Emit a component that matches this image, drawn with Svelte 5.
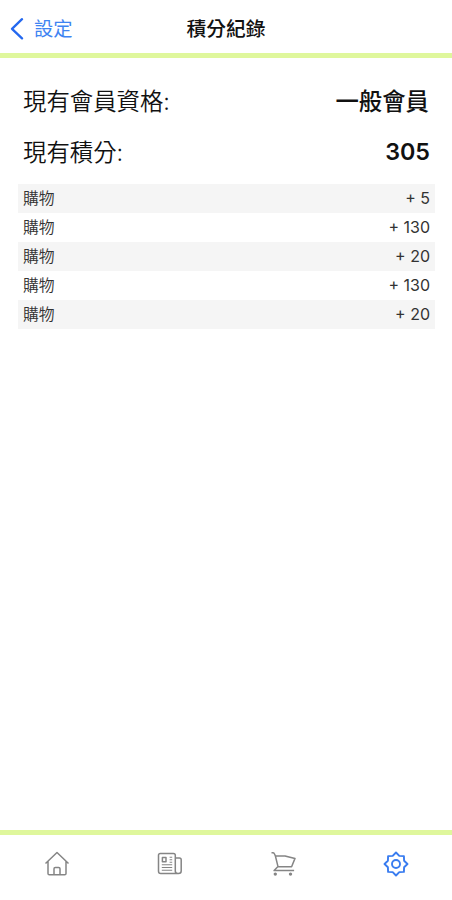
<!--
  PointsHistory — membership tier, current points and the list of point changes.
-->
<script>
  let active = $state('settings');

  const membership = '一般會員';
  const points = 305;
  const records = [
    { label: '購物', amount: 5 },
    { label: '購物', amount: 130 },
    { label: '購物', amount: 20 },
    { label: '購物', amount: 130 },
    { label: '購物', amount: 20 },
  ];
  const TABS = ['home', 'news', 'cart', 'settings'];
</script>

<div class="screen">
  <header>
    <button class="back">
      <svg width="14" height="22" viewBox="0 0 14 22"><path d="M12 1.2 2 10.8 12 20.4" /></svg>
      <span>設定</span>
    </button>
    <h1>積分紀錄</h1>
  </header>

  <main>
    <div class="summary"><span>現有會員資格:</span><strong>{membership}</strong></div>
    <div class="summary"><span>現有積分:</span><strong class="points">{points}</strong></div>
    <ul>
      {#each records as r}
        <li><span>{r.label}</span><span class="amount">+ {r.amount}</span></li>
      {/each}
    </ul>
  </main>

  <nav>
    {#each TABS as tab}
      <button class="tab" class:active={active === tab} aria-label={tab} onclick={() => (active = tab)}>
        <svg width="26" height="26" viewBox="0 0 26 26">
          {#if tab === 'home'}
            <path d="M1.5 12.5 13 1.5 24.5 12.5M4 10.5v11.9q0 1.3 1.3 1.3h15.4q1.3 0 1.3-1.3V10.5M10 23.5v-5.7q0-1.3 1.3-1.3h3.4q1.3 0 1.3 1.3v5.7" />
          {:else if tab === 'news'}
            <path d="M18.3 20.5V4.3q0-1.8-1.8-1.8H3.3Q1.5 2.5 1.5 4.3v15.9q0 2.3 2.3 2.3h17.7q2.7 0 2.7-2.5V8.7q0-1.8-1.8-1.8h-4M18.3 20q0 2.5 2.5 2.5" />
            <path class="thin" d="M4.8 13.8h10.4M4.8 16.5h10.4M4.8 19.2h10.4M12.6 6.2h2.6M12.6 8.7h2.6M12.6 11.2h2.6" />
            <rect x="5.4" y="6.4" width="3.6" height="4.4" />
          {:else if tab === 'cart'}
            <path d="M1.5 1.7h1.6q1 0 1.3 1L5.4 5 8 15.6 4.1 19.6h20M5.4 5h9.6l10 2.4-3.4 8.4L8 15.6" />
            <circle class="wheel" cx="5.3" cy="23.1" r="1.7" />
            <circle class="wheel" cx="20.5" cy="23.1" r="1.7" />
          {:else}
            <path d="M13 1.5 16.3 4.9 20.9 5.1 21.1 9.7 24.5 13 21.1 16.3 20.9 20.9 16.3 21.1 13 24.5 9.7 21.1 5.1 20.9 4.9 16.3 1.5 13 4.9 9.7 5.1 5.1 9.7 4.9z" />
            <circle cx="13" cy="13" r="4" />
          {/if}
        </svg>
      </button>
    {/each}
  </nav>
</div>

<style>
  :global(body) { margin: 0; background: #fff; }
  .screen { height: 100vh; display: flex; flex-direction: column; color: #111; background: #fff; font-family: Inter, "Noto Sans CJK TC", sans-serif; }
  header { box-sizing: border-box; height: 58px; display: grid; grid-template-columns: 1fr auto 1fr; align-items: center; border-bottom: 5px solid #dff79c; padding-top: 5px; }
  button { border: 0; padding: 0; background: none; font: inherit; cursor: pointer; }
  .back { display: flex; align-items: center; gap: 10px; padding-left: 10px; color: #3f84f2; font-size: 19.3px; line-height: 28px; }
  .back svg path { fill: none; stroke: #2468ef; stroke-width: 2.3; stroke-linecap: round; stroke-linejoin: round; }
  h1 { margin: 0; font-size: 19.8px; line-height: 28px; font-weight: 500; }
  main { flex: 1; padding: 16px 17px 0 18px; }
  .summary { display: flex; justify-content: space-between; align-items: center; height: 51px; padding: 0 6px 0 5px; font-size: 23.4px; font-weight: 350; }
  .summary strong { font-weight: 500; }
  .summary .points { font-size: 23.3px; font-weight: 600; padding-top: 2px; margin-right: -1px; }
  ul { list-style: none; margin: 8px 0 0; padding: 0; }
  li { box-sizing: border-box; display: flex; justify-content: space-between; align-items: center; height: 29px; padding: 0 5px 2px; font-size: 15.8px; font-weight: 350; color: #333; }
  li:nth-child(odd) { background: #f5f5f5; }
  .amount { font-size: 16px; font-weight: 400; padding-top: 1px; }
  nav { box-sizing: border-box; height: 70px; display: flex; border-top: 5px solid #dff79c; padding-bottom: 8px; }
  .tab { flex: 1; display: flex; align-items: center; justify-content: center; color: #858585; }
  .tab.active { color: #397cf0; }
  .tab svg { fill: none; stroke: currentColor; stroke-width: 1.5; stroke-linejoin: round; }
  .tab.active svg { stroke-width: 1.9; }
  .tab .thin { stroke-width: 1.1; }
  .tab .wheel { fill: currentColor; stroke: none; }
</style>
